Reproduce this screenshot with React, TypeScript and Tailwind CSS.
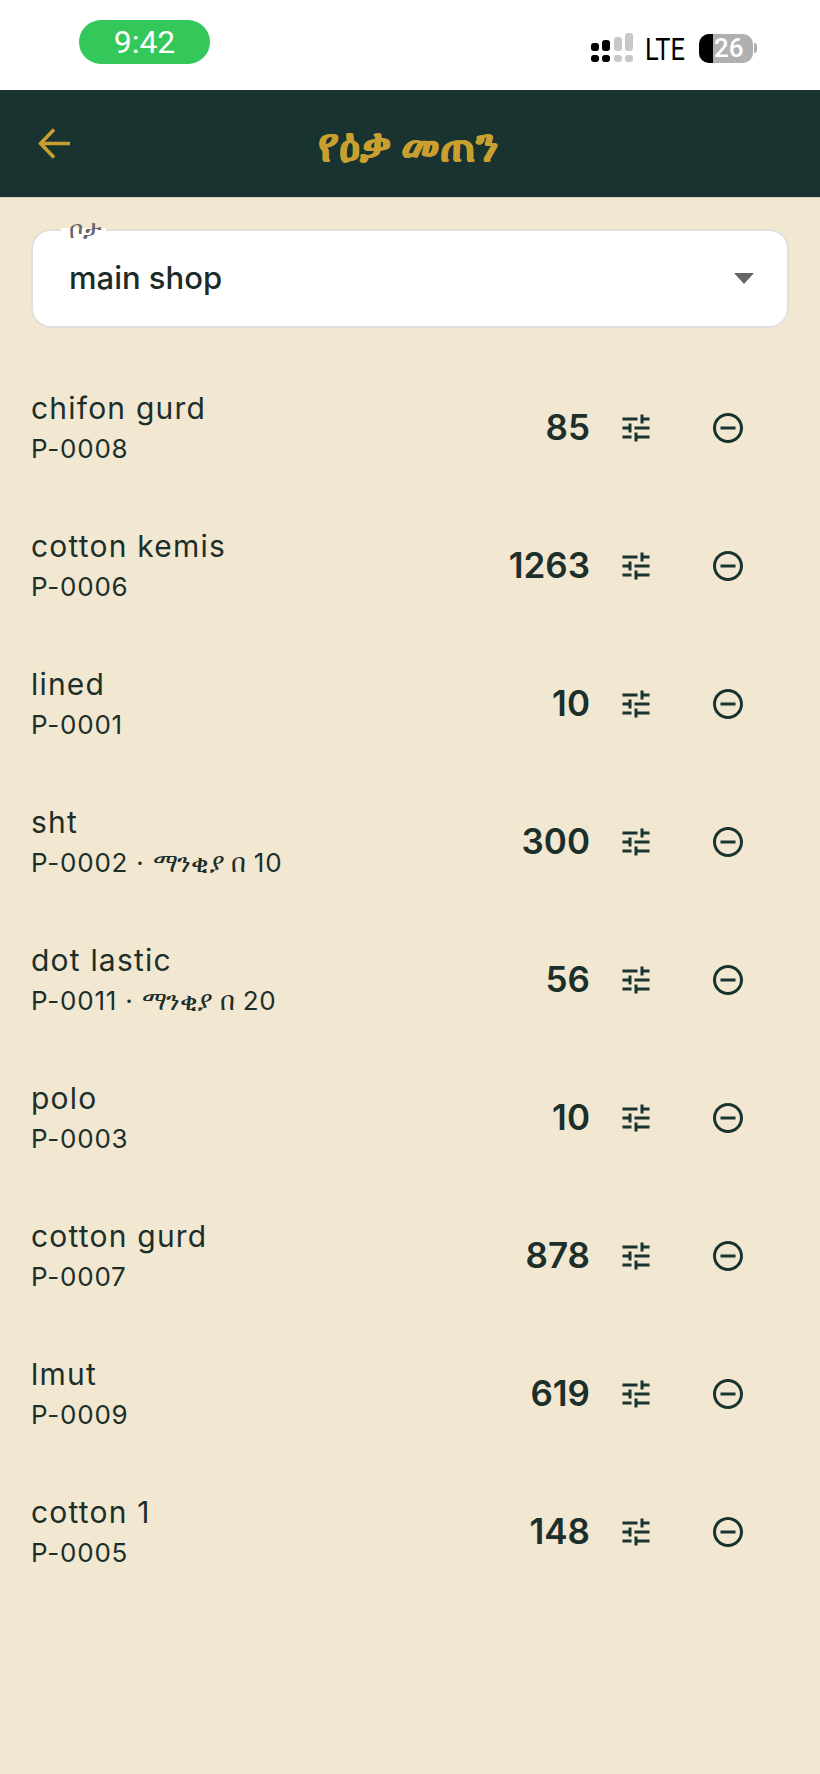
const items = [
  { name: 'chifon gurd', code: 'P-0008', qty: 85 },
  { name: 'cotton kemis', code: 'P-0006', qty: 1263 },
  { name: 'lined', code: 'P-0001', qty: 10 },
  { name: 'sht', code: 'P-0002', alert: 10, qty: 300 },
  { name: 'dot lastic', code: 'P-0011', alert: 20, qty: 56 },
  { name: 'polo', code: 'P-0003', qty: 10 },
  { name: 'cotton gurd', code: 'P-0007', qty: 878 },
  { name: 'lmut', code: 'P-0009', qty: 619 },
  { name: 'cotton 1', code: 'P-0005', qty: 148 },
]

const TuneIcon = () => (
  <svg viewBox="0 0 24 24" fill="currentColor" className="h-9 w-9">
    <path d="M3 17v2h6v-2H3zM3 5v2h10V5H3zm10 16v-2h8v-2h-8v-2h-2v6h2zM7 9v2H3v2h4v2h2V9H7zm14 4v-2H11v2h10zm-6-4h2V7h4V5h-4V3h-2v6z" />
  </svg>
)

const MinusCircleIcon = () => (
  <svg viewBox="0 0 24 24" fill="currentColor" className="h-9 w-9">
    <path d="M7 11v2h10v-2H7zm5-9C6.48 2 2 6.48 2 12s4.48 10 10 10 10-4.48 10-10S17.52 2 12 2zm0 18c-4.41 0-8-3.59-8-8s3.59-8 8-8 8 3.59 8 8-3.59 8-8 8z" />
  </svg>
)

const SignalIcon = () => (
  <svg viewBox="0 0 42 30" className="h-[30px] w-[42px]">
    <rect x="0" y="10" width="8" height="8" rx="3" fill="#000" />
    <rect x="0" y="22" width="8" height="7" rx="3" fill="#000" />
    <rect x="11" y="7" width="8" height="11" rx="3" fill="#000" />
    <rect x="11" y="22" width="8" height="7" rx="3" fill="#000" />
    <rect x="23" y="4" width="8" height="14" rx="3" fill="#c8c8c8" />
    <rect x="23" y="22" width="8" height="7" rx="3" fill="#c8c8c8" />
    <rect x="34" y="0" width="8" height="18" rx="3" fill="#c8c8c8" />
    <rect x="34" y="22" width="8" height="7" rx="3" fill="#c8c8c8" />
  </svg>
)

export default function App() {
  return (
    <div className="flex min-h-[1774px] flex-col bg-[#f2e7d0] font-['Inter','DejaVu_Sans',sans-serif] text-[#1c2f2b]">
      <div className="flex h-[90px] items-start justify-between bg-white pr-[63px] pl-[79px]">
        <div className="mt-5 flex h-11 w-[131px] items-center justify-center rounded-full bg-[#34c759] font-['Roboto',sans-serif] text-[32px] text-white">
          9:42
        </div>
        <div className="mt-[33px] flex h-[30px] items-center">
          <SignalIcon />
          <span className="mt-[2px] ml-[12px] w-[41px] origin-left scale-x-[0.82] font-['Roboto',sans-serif] text-[31px] leading-none whitespace-nowrap text-black">LTE</span>
          <div className="relative ml-[13px] flex h-[29px] w-[54px] items-center rounded-[10px] bg-[#b0b0b0] pl-[15px]">
            <div className="absolute inset-y-0 left-0 w-[14px] rounded-l-[10px] bg-black" />
            <span className="relative font-['Roboto',sans-serif] text-[26px] leading-none font-medium text-white">26</span>
          </div>
          <div className="ml-[1px] h-[10px] w-[3px] rounded-r-full bg-[#b0b0b0]" />
        </div>
      </div>

      <header className="flex h-[108px] items-center border-b border-[#d8cfb4] bg-[#183330] pl-[38px]">
        <svg viewBox="0 0 32 31" fill="none" stroke="#c9a030" strokeWidth="3.5" className="h-[31px] w-[32px] flex-none">
          <path d="M32 15.5H3M16 1.5 2.5 15.5l13.5 14" />
        </svg>
        <h1 className="ml-[248px] scale-y-[1.12] text-[43px] font-bold text-[#c9a030] [-webkit-text-stroke:0.6px_#c9a030]">የዕቃ መጠን</h1>
      </header>

      <main className="px-[31px]">
        <div className="relative mt-[31px] flex h-[99px] items-center justify-between rounded-[20px] border-2 border-[#e0e0dc] bg-white pr-[33px] pl-[36px]">
          <div className="absolute -top-[3px] left-[28px] h-[6px] w-[45px] bg-white" />
          <span className="absolute -top-[14px] left-[36px] text-[25px] leading-none text-[#666666]">ቦታ</span>
          <span className="text-[31px] font-medium text-[#1b2b28]">main shop</span>
          <div className="h-0 w-0 border-x-[10px] border-t-[11px] border-x-transparent border-t-[#666666]" />
        </div>

        <ul className="mt-[31px] text-[#1c2f2b]">
          {items.map((item) => (
            <li key={item.code} className="flex h-[138px] items-center">
              <div className="min-w-0 flex-1">
                <div className="-mt-[4px] text-[30px] leading-[38px] font-normal tracking-[1.2px]">{item.name}</div>
                <div className="mt-[7px] text-[26px] leading-[30px] font-normal tracking-[0.8px]">
                  {item.code}
                  {item.alert && (
                    <>
                      {' · '}
                      <span className="tracking-[-0.4px]">ማንቂያ በ</span> {item.alert}
                    </>
                  )}
                </div>
              </div>
              <span className="mb-[2px] text-[35px] font-semibold">{item.qty}</span>
              <div className="ml-[28px] flex items-center text-[#183330]">
                <TuneIcon />
              </div>
              <div className="mr-[43px] ml-[56px] flex items-center text-[#183330]">
                <MinusCircleIcon />
              </div>
            </li>
          ))}
        </ul>
      </main>
    </div>
  )
}
